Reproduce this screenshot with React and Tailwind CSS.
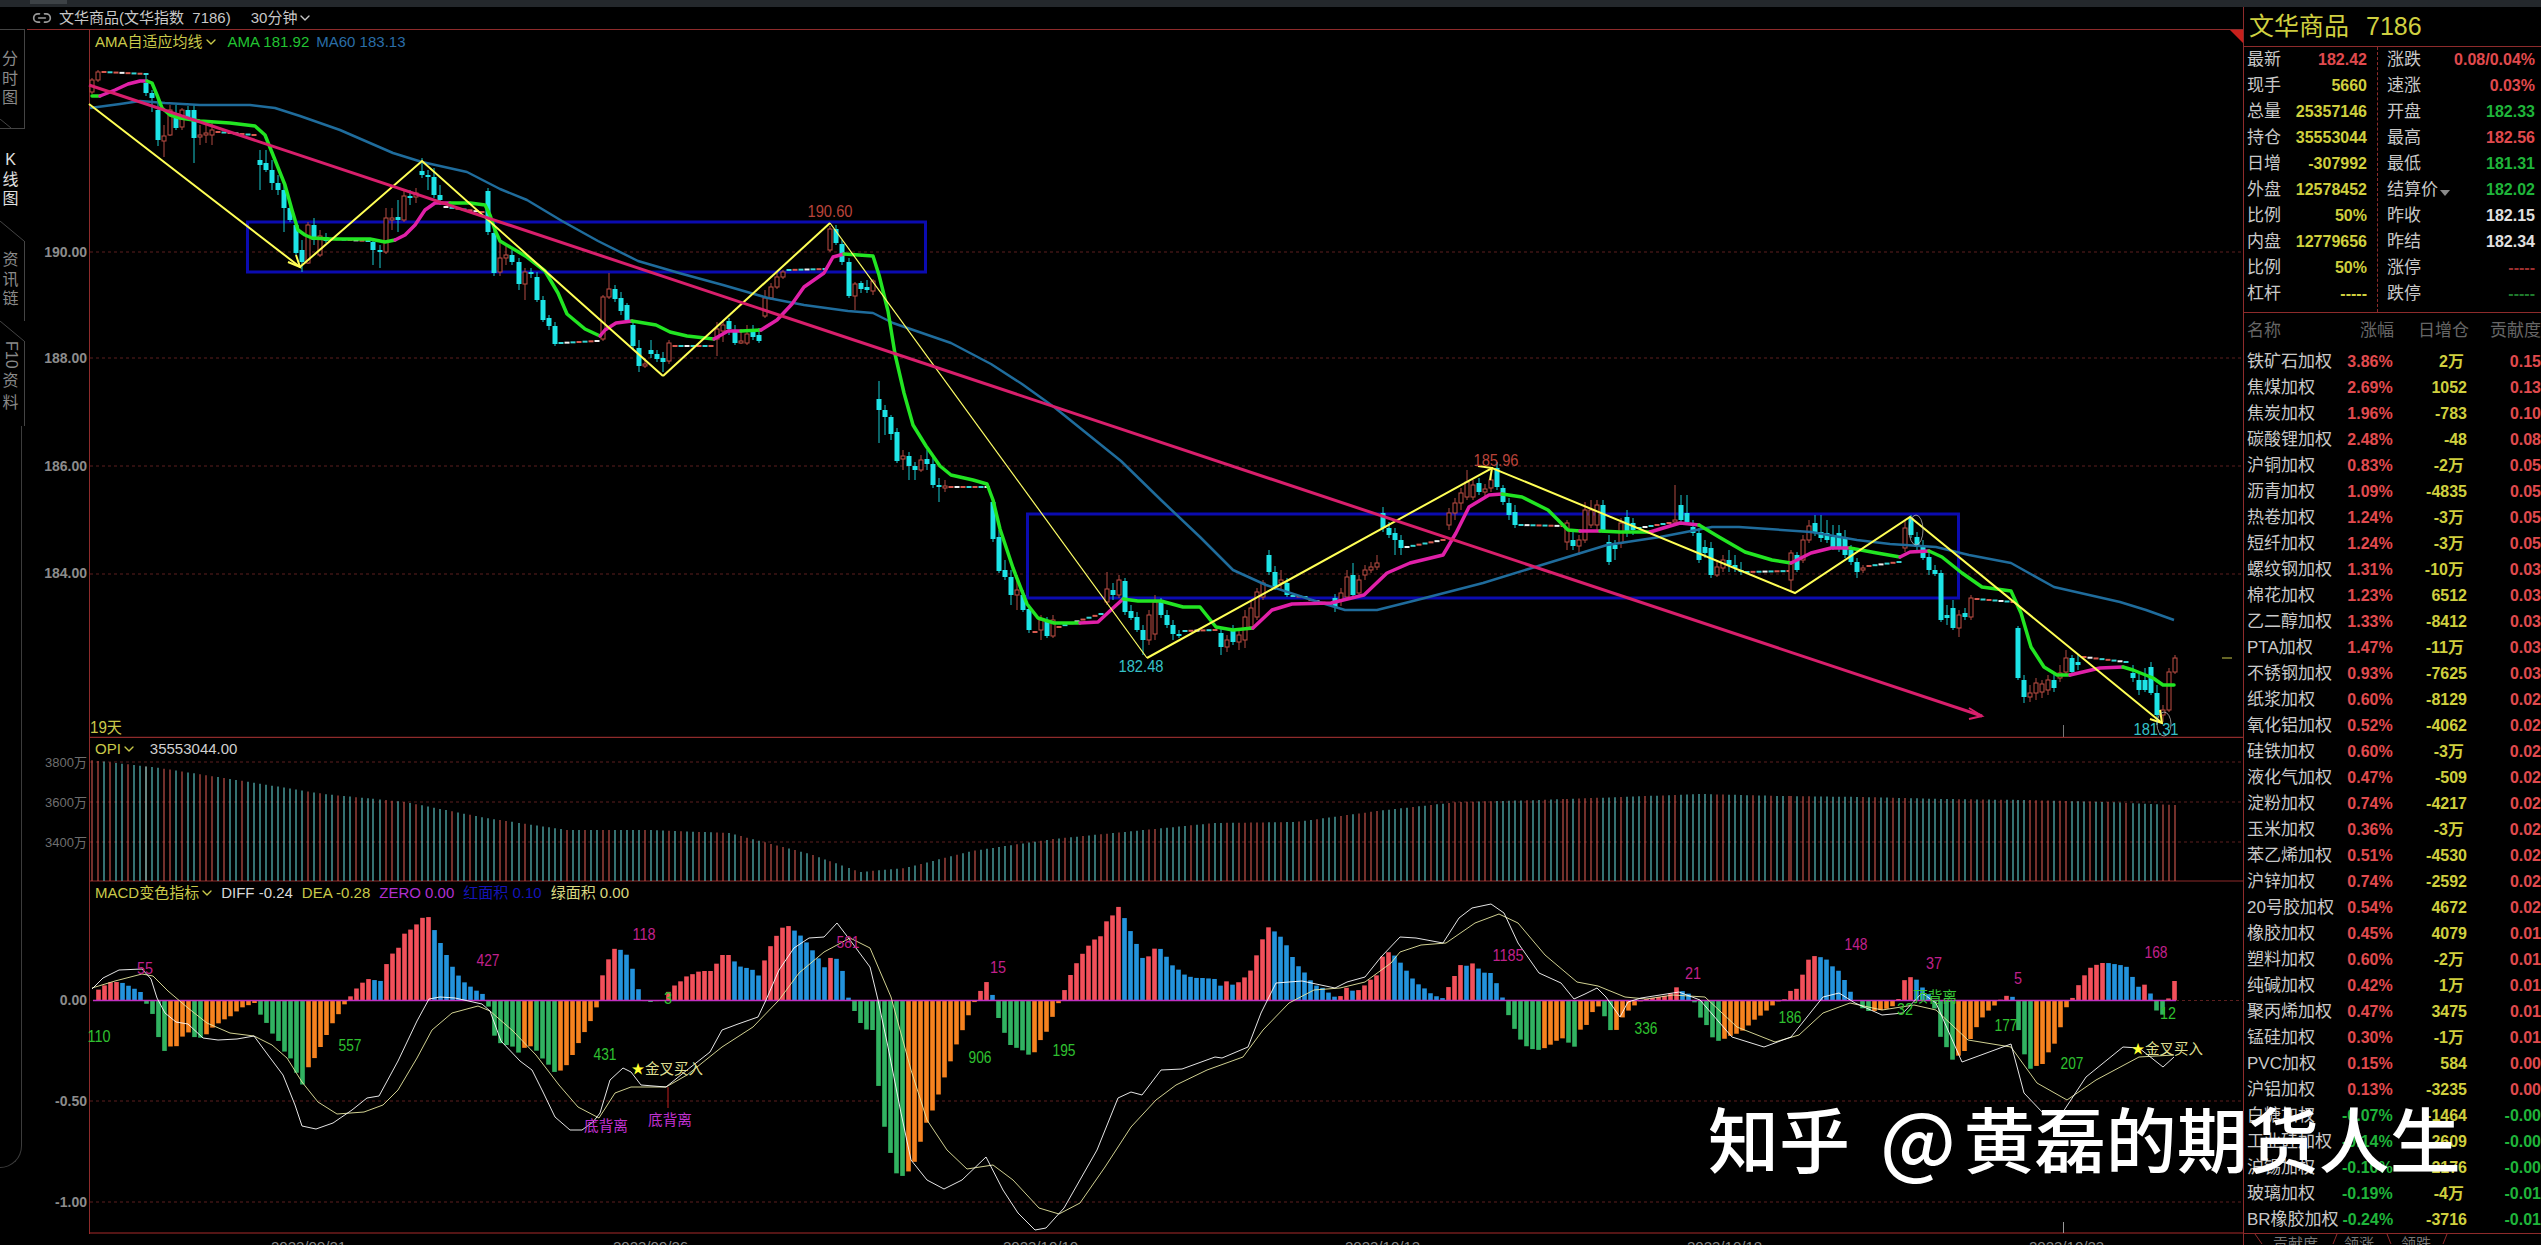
import React from 'react';
import { ChevronDown, Link2 } from 'lucide-react';

// candle bars: [x, open, close, high, low] in page pixels
const run = (x0, x1, y0, y1) => {
  const out = [];
  const n = Math.round((x1 - x0) / 6);
  for (let k = 0; k <= n; k++) {
    const y = y0 + ((y1 - y0) * k) / Math.max(n, 1);
    out.push([x0 + k * 6, y, y + (k % 3 === 1 ? -0.5 : 0.5), y - 1, y + 1]);
  }
  return out;
};

const bars = [
  [92,92,80,78,94],[98,80,72,70,82],
  ...run(104,143,72,74),
  [146,83,93,75,96],[152,93,98,90,112],[158,110,140,95,146],[164,141,136,125,157],[170,135,110,105,136],[176,113,128,105,130],[182,127,110,108,130],[188,110,118,106,120],[194,110,138,105,163],[200,137,135,125,145],[206,135,133,123,143],[212,135,130,120,145],
  ...run(218,255,132,135),
  [260,160,165,150,190],[266,163,170,150,172],[272,170,183,160,190],[278,183,190,175,195],[284,190,208,185,232],[290,208,220,200,222],[296,225,253,222,255],[302,250,262,240,272],[308,263,225,222,264],[314,225,240,218,245],[320,255,236,230,257],[326,237,241,233,243],
  ...run(332,367,239,241),
  [373,242,250,238,265],[380,250,252,245,268],[386,252,218,208,254],[392,220,218,208,230],[398,217,220,200,232],[404,220,196,190,222],[410,196,198,190,205],[416,197,193,188,203],[422,171,175,158,178],[428,175,177,170,190],[434,177,195,168,198],[440,195,200,185,205],
  ...run(446,483,207,212),
  [488,191,232,188,235],[494,233,273,225,276],[500,272,258,240,276],[506,258,255,245,265],[512,255,262,250,265],[519,262,284,258,290],[525,284,272,268,300],[531,272,274,268,278],[537,277,300,272,302],[543,300,320,296,322],[549,318,326,315,330],[555,326,344,322,346],
  ...run(561,597,343,341),
  [603,339,297,295,341],[609,297,289,273,299],[615,289,299,285,302],[621,298,311,292,315],[627,305,320,303,322],[633,325,346,320,350],[639,348,366,340,372],[645,366,364,358,368],[651,350,354,340,358],[657,354,359,350,362],[663,358,362,352,372],[669,361,343,340,364],
  ...run(675,711,346,346),
  [717,339,329,322,356],[723,331,325,320,342],[729,321,329,318,335],[735,332,343,325,345],[741,343,341,330,344],[747,343,334,325,345],[753,332,337,325,340],[759,335,341,328,343],[765,316,298,290,318],[771,298,287,283,300],[777,287,277,272,289],[783,277,272,270,279],
  ...run(789,825,270,269),
  [830,250,229,226,252],[836,229,243,225,245],[842,244,262,240,265],[849,262,296,258,298],[855,296,284,282,310],[861,283,289,281,293],[867,287,290,280,293],[873,291,281,279,295],[879,399,410,381,443],[885,410,417,405,435],[891,417,434,415,440],[897,432,461,428,463],[903,459,456,450,470],[909,456,466,452,480],[915,466,470,462,480],[921,470,460,455,472],[927,459,464,450,470],[933,464,485,455,488],[939,485,487,478,502],[945,488,486,480,492],
  ...run(951,987,487,487),
  [993,502,539,498,542],[999,537,571,530,573],[1005,570,577,560,580],[1011,577,595,570,605],[1017,595,590,575,610],[1023,595,610,590,612],[1029,609,630,605,633],[1035,632,632,627,637],[1041,630,620,615,640],[1047,621,636,617,638],[1053,636,620,615,638],
  ...run(1059,1101,627,614),
  [1107,602,589,572,605],[1113,590,595,583,600],[1119,595,580,575,598],[1125,581,612,578,615],[1131,611,618,605,620],[1137,617,630,612,632],[1143,630,640,625,655],[1149,640,615,610,645],[1155,634,602,595,640],[1161,602,615,598,618],[1167,615,625,610,628],[1173,625,634,620,640],[1179,634,636,630,638],
  ...run(1185,1215,631,630),
  [1221,633,647,628,655],[1227,647,640,635,652],[1233,630,642,625,645],[1239,642,635,630,650],[1245,640,617,610,648],[1251,627,608,600,630],[1257,617,592,588,620],[1263,597,583,580,600],[1269,555,572,550,575],[1275,572,587,566,590],[1281,583,580,570,590],[1287,583,595,578,597],
  ...run(1293,1305,596,597),...run(1311,1329,600,604),
  [1335,598,607,594,612],[1341,600,593,588,606],[1347,597,577,570,600],[1353,575,595,563,598],[1359,593,580,575,596],[1365,575,570,565,580],[1371,570,567,562,573],[1377,567,563,555,570],[1383,513,528,507,532],[1389,528,535,522,538],[1395,533,540,528,555],[1401,540,548,535,555],
  ...run(1407,1443,547,540),
  [1449,525,513,508,530],[1455,513,503,498,520],[1461,503,493,488,510],[1467,497,482,470,500],[1473,497,485,480,500],[1479,483,492,478,495],[1485,492,489,484,496],[1491,488,480,475,492],[1497,468,487,462,490],[1503,488,502,485,505],[1509,503,515,498,520],[1515,512,525,505,528],
  ...run(1521,1561,525,526),
  [1567,542,523,520,550],[1573,540,546,530,550],[1579,546,540,535,555],[1585,540,510,502,543],[1591,525,510,500,528],[1597,525,505,500,530],[1603,505,530,500,533],[1609,542,562,535,565],[1615,545,549,540,560],[1621,543,523,518,548],[1627,517,533,510,537],[1633,523,530,518,535],
  ...run(1639,1669,528,523),
  [1675,522,520,485,524],[1681,505,520,495,525],[1687,513,522,495,525],[1693,527,533,520,536],[1699,533,560,528,563],[1705,547,553,540,558],[1711,548,575,542,578],[1717,575,567,560,577],[1723,568,560,555,572],[1729,560,565,550,572],[1735,565,568,555,572],[1741,570,572,562,575],
  ...run(1747,1787,572,571),
  [1791,580,553,550,592],[1797,555,570,552,572],[1803,560,540,535,563],[1809,540,526,520,543],[1815,523,533,515,536],[1821,532,538,515,542],[1827,533,540,520,543],[1833,537,547,525,550],[1839,533,547,525,552],[1845,538,555,530,558],[1851,550,562,545,565],[1857,562,572,558,578],[1863,570,568,565,573],
  ...run(1869,1899,566,562),
  [1905,548,528,520,552],[1911,518,535,515,538],[1917,537,547,532,550],[1923,545,558,540,560],[1929,557,570,552,575],[1935,570,574,565,576],[1941,573,620,570,622],[1947,615,618,605,625],[1953,608,628,600,630],[1959,628,615,610,637],[1965,613,617,608,620],[1971,617,598,595,620],
  ...run(1977,2011,599,602),
  [2018,628,678,626,680],[2024,680,697,675,703],[2030,697,693,685,702],[2036,693,683,678,700],[2042,692,684,680,698],[2048,690,680,675,695],[2054,680,688,672,692],[2060,678,673,665,682],[2066,672,658,650,675],[2072,658,672,655,675],[2078,662,665,655,670],
  ...run(2084,2126,657,662),
  [2133,673,678,665,682],[2139,680,690,672,695],[2145,680,690,668,692],[2151,667,693,662,695],[2157,693,715,685,725],[2163,715,710,705,722],[2169,710,672,668,712],[2175,672,658,655,674],
];

const GREEN = '#22e522';
const PINK = '#e020a8';
// adaptive average, coloured by slope section
const ama = [
  [GREEN,[92,96],[100,96]],
  [PINK,[100,96],[115,90],[128,84],[140,81],[147,81]],
  [GREEN,[147,81],[152,83],[157,95],[162,108],[170,115],[180,118],[200,121],[230,123],[255,126],[265,135],[275,160],[285,185],[292,210],[298,230],[305,235],[312,238],[330,239],[370,239],[385,242],[395,240]],
  [PINK,[395,240],[405,235],[415,225],[425,210],[435,203],[450,203]],
  [GREEN,[450,203],[470,203],[485,205],[490,215],[495,230],[500,241],[527,257],[545,271],[558,293],[567,314],[585,329],[600,336]],
  [PINK,[600,336],[605,330],[616,323],[632,321]],
  [GREEN,[632,321],[656,325],[670,332],[687,336],[714,339]],
  [PINK,[714,339],[728,331],[741,331]],
  [GREEN,[741,331],[761,330]],
  [PINK,[761,330],[777,320],[792,304],[804,287],[824,273],[833,257],[844,254]],
  [GREEN,[844,254],[873,256],[879,275],[888,311],[895,354],[904,393],[913,425],[926,446],[940,466],[951,475],[973,480],[987,484],[993,500],[1000,529],[1013,568],[1027,604],[1038,618],[1054,623],[1080,623]],
  [PINK,[1080,623],[1098,622],[1112,609],[1123,599]],
  [GREEN,[1123,599],[1138,601],[1161,601],[1183,607],[1200,607],[1216,627],[1233,630],[1253,628]],
  [PINK,[1253,628],[1272,610],[1292,604],[1331,603],[1364,595],[1387,573],[1410,563],[1443,555],[1456,533],[1469,507],[1489,495],[1502,494]],
  [GREEN,[1502,494],[1522,497],[1548,510],[1568,530],[1580,531]],
  [PINK,[1580,531],[1600,531]],
  [GREEN,[1600,531],[1620,532],[1650,532]],
  [PINK,[1650,532],[1680,523],[1699,525]],
  [GREEN,[1699,525],[1719,537],[1745,552],[1772,560],[1791,563]],
  [PINK,[1791,563],[1811,553],[1831,548],[1850,548]],
  [GREEN,[1850,548],[1877,553],[1900,557]],
  [PINK,[1900,557],[1910,552],[1929,551]],
  [GREEN,[1929,551],[1942,557],[1962,573],[1982,587],[2011,591],[2021,613],[2031,647],[2044,667],[2057,675],[2070,675]],
  [PINK,[2070,675],[2100,668],[2123,667]],
  [GREEN,[2123,667],[2133,670],[2153,678],[2163,685],[2174,685]],
];

const ma60 = [[90,108],[120,104],[140,101],[165,103],[200,105],[250,105],[275,108],[300,116],[340,130],[393,153],[422,162],[467,172],[500,189],[527,200],[562,221],[598,241],[638,261],[679,273],[723,285],[768,298],[804,305],[848,311],[873,313],[893,323],[951,343],[991,364],[1022,384],[1054,407],[1121,461],[1161,500],[1200,537],[1233,570],[1266,585],[1312,600],[1345,610],[1377,610],[1417,600],[1483,583],[1535,567],[1607,545],[1660,537],[1712,527],[1739,527],[1811,532],[1857,540],[1890,544],[1936,547],[1969,555],[2011,563],[2054,587],[2120,602],[2146,610],[2174,620]];

const zigzag = [[89,104],[300,267],[422,161],[663,376],[830,223]];
const zigzag2 = [[1147,658],[1492,468],[1795,593],[1910,517],[2162,723]];

// open interest tops along the x axis
const opiTop = [[90,760],[160,768],[243,781],[324,794],[405,802],[486,818],[567,830],[648,830],[729,833],[810,854],[860,872],[905,868],[972,851],[1053,839],[1134,831],[1215,823],[1296,822],[1377,811],[1458,802],[1539,800],[1620,797],[1701,794],[1782,796],[1863,797],[1944,799],[2025,800],[2106,802],[2174,805]];

// histogram height per bar
const hist = [92,-1,98,10,105,15,111,18,117,18,123,17,129,14,135,11,140,9,146,-3,152,-12,159,-39,165,-52,171,-46,176,-47,182,-37,188,-32,194,-37,200,-38,207,-34,213,-27,219,-23,225,-19,231,-16,237,-11,243,-7,249,-5,254,-2,260,-14,266,-22,272,-33,278,-40,284,-51,291,-59,297,-74,302,-86,308,-68,314,-59,320,-48,326,-36,332,-24,338,-15,344,-5,350,3,356,11,362,17,368,21,374,20,381,19,386,35,392,46,398,51,404,66,410,70,416,75,422,82,428,84,434,71,440,58,446,46,452,34,458,25,464,18,471,13,477,9,482,7,488,-4,494,-35,500,-43,506,-45,512,-46,518,-53,524,-48,530,-46,536,-50,542,-58,548,-64,554,-72,560,-71,566,-66,572,-56,578,-44,584,-33,590,-22,596,-11,600,18,609,42,615,52,621,50,628,44,634,27,639,9,645,-2,651,-2,657,-1,663,-1,669,9,675,15,681,19,687,24,693,26,700,29,711,29,717,37,722,45,729,45,735,38,741,33,747,32,753,30,759,24,765,41,771,55,777,65,783,73,789,74,795,69,801,64,807,57,813,49,819,41,825,32,831,43,837,41,843,28,849,0,855,-12,861,-24,867,-30,873,-30,879,-91,885,-130,891,-155,897,-175,903,-176,909,-171,915,-161,921,-140,928,-118,934,-108,939,-93,945,-76,951,-60,957,-43,963,-29,969,-14,975,-1,981,10,986,19,993,4,999,-20,1005,-34,1011,-46,1017,-48,1022,-50,1029,-55,1035,-52,1041,-39,1046,-33,1052,-18,1059,-2,1065,11,1070,24,1076,36,1083,47,1089,55,1095,61,1101,64,1107,80,1113,85,1118,94,1124,83,1130,70,1137,55,1142,42,1148,43,1155,52,1161,51,1166,44,1172,35,1179,30,1185,25,1191,23,1197,22,1203,22,1215,21,1220,14,1227,19,1233,15,1239,18,1245,23,1251,30,1257,46,1263,62,1268,73,1274,69,1280,64,1287,54,1293,42,1299,33,1305,27,1311,19,1317,14,1323,12,1329,7,1335,3,1341,4,1347,13,1353,9,1359,10,1365,15,1370,20,1377,25,1382,43,1388,48,1394,45,1400,38,1406,30,1412,22,1418,16,1424,12,1430,7,1436,4,1442,1,1448,12,1454,23,1460,35,1466,34,1472,37,1479,31,1485,27,1491,27,1496,18,1502,4,1508,-14,1515,-30,1520,-39,1526,-46,1532,-49,1538,-50,1545,-48,1550,-45,1556,-41,1562,-38,1569,-43,1575,-47,1580,-30,1586,-26,1593,-11,1599,-6,1604,-15,1610,-30,1616,-31,1622,-18,1629,-10,1635,-5,1641,-1,1646,1,1652,2,1658,3,1664,4,1670,6,1676,13,1682,9,1688,7,1694,-1,1700,-17,1706,-24,1712,-37,1718,-41,1724,-39,1730,-36,1736,-34,1742,-31,1748,-26,1754,-20,1760,-16,1766,-11,1773,-5,1779,-1,1784,0,1790,9,1796,10,1802,24,1808,40,1814,44,1820,43,1826,41,1832,34,1838,30,1844,21,1850,9,1856,0,1862,-8,1868,-11,1874,-11,1880,-10,1886,-9,1893,-6,1898,-1,1903,19,1910,23,1916,21,1922,13,1928,7,1934,-6,1940,-36,1946,-46,1952,-60,1958,-56,1964,-52,1970,-40,1976,-28,1982,-18,1988,-11,1994,-6,2000,0,2006,4,2012,6,2018,-28,2024,-53,2030,-69,2036,-66,2042,-65,2048,-53,2054,-45,2060,-29,2066,-8,2072,1,2078,14,2084,24,2090,32,2096,35,2102,37,2108,37,2114,36,2120,35,2126,34,2132,24,2138,13,2144,16,2150,8,2156,-10,2162,-16,2168,0,2174,19];

const diff = [[92,989],[103,978],[119,970],[142,969],[151,979],[157,998],[165,1013],[176,1022],[188,1024],[203,1038],[218,1040],[237,1039],[254,1036],[268,1055],[283,1075],[295,1105],[302,1126],[316,1129],[333,1123],[352,1110],[367,1098],[379,1096],[398,1061],[417,1021],[429,999],[440,997],[455,998],[482,1004],[490,1011],[501,1041],[520,1061],[532,1070],[543,1092],[555,1117],[570,1130],[582,1130],[593,1122],[600,1113],[610,1080],[623,1068],[631,1072],[641,1085],[666,1087],[687,1070],[710,1052],[722,1030],[738,1024],[758,1017],[766,1000],[779,970],[794,948],[809,938],[824,937],[837,923],[850,940],[870,967],[878,1000],[888,1047],[901,1113],[911,1160],[927,1180],[944,1189],[962,1180],[986,1157],[1003,1190],[1018,1213],[1035,1230],[1046,1228],[1064,1208],[1097,1150],[1118,1098],[1131,1092],[1142,1095],[1161,1070],[1182,1069],[1215,1057],[1222,1058],[1248,1047],[1261,1013],[1276,983],[1302,981],[1335,988],[1347,982],[1365,977],[1381,957],[1400,937],[1416,938],[1443,943],[1459,918],[1472,908],[1491,904],[1504,913],[1518,943],[1539,973],[1561,983],[1574,999],[1585,994],[1597,988],[1606,997],[1620,1017],[1628,1002],[1641,998],[1679,992],[1700,1000],[1732,1037],[1764,1047],[1791,1037],[1823,997],[1839,993],[1855,1003],[1882,1015],[1903,1013],[1922,993],[1936,1003],[1962,1062],[2011,1044],[2024,1093],[2043,1113],[2061,1115],[2086,1077],[2123,1047],[2139,1048],[2163,1067],[2174,1057]];
const dea = [[92,988],[115,981],[142,974],[153,976],[168,991],[188,1008],[207,1023],[230,1033],[254,1036],[272,1045],[287,1058],[302,1082],[318,1102],[337,1114],[364,1112],[383,1105],[398,1090],[417,1058],[432,1030],[452,1013],[478,1006],[490,1011],[513,1031],[536,1055],[559,1085],[578,1107],[599,1118],[615,1093],[631,1087],[666,1087],[687,1075],[722,1047],[753,1027],[779,1000],[799,973],[824,952],[850,938],[870,948],[891,997],[911,1070],[927,1120],[947,1150],[967,1169],[993,1165],[1013,1180],[1039,1208],[1059,1214],[1080,1203],[1105,1167],[1131,1127],[1156,1100],[1176,1085],[1207,1070],[1243,1057],[1263,1030],[1289,1003],[1314,990],[1340,988],[1365,982],[1391,963],[1400,952],[1421,945],[1446,943],[1475,923],[1499,914],[1518,923],[1545,955],[1577,982],[1598,986],[1625,997],[1646,999],[1673,995],[1705,997],[1737,1027],[1775,1042],[1799,1035],[1823,1013],[1850,1003],[1882,1010],[1914,1005],[1936,1010],[1968,1040],[2011,1047],[2037,1083],[2067,1100],[2096,1080],[2139,1057],[2174,1055]];

const LINE_RED = '#8e2b2b';
const GRID = '#5c1f1f';
const AXIS = '#8c8c8c';
const pts = (list) => list.map((p) => p.join(',')).join(' ');

const interp = (list, x) => {
  for (let k = 1; k < list.length; k++) {
    if (x <= list[k][0]) {
      const [x0, y0] = list[k - 1];
      const [x1, y1] = list[k];
      return y0 + ((y1 - y0) * (x - x0)) / (x1 - x0);
    }
  }
  return list[list.length - 1][1];
};

const histPairs = [];
for (let k = 0; k < hist.length; k += 2) histPairs.push([hist[k], hist[k + 1]]);

function Candle({ bar, index }) {
  const [x, o, c, hi, lo] = bar;
  const doji = Math.abs(o - c) < 1.5;
  if (doji) {
    const tone = index % 5 === 0 ? '#f2f2f2' : index % 2 === 0 ? '#d85a50' : '#35d6d6';
    return <line x1={x - 2.5} x2={x + 2.5} y1={o} y2={o} stroke={tone} strokeWidth="2" />;
  }
  const up = c < o;
  const top = Math.min(o, c);
  const h = Math.abs(o - c);
  return (
    <g>
      <line x1={x} x2={x} y1={hi} y2={lo} stroke={up ? '#b04a42' : '#18c9cf'} strokeWidth="1" />
      {up ? (
        <rect x={x - 2} y={top} width="4" height={h} fill="#000" stroke="#c04e45" strokeWidth="1" />
      ) : (
        <rect x={x - 2.5} y={top} width="5" height={h} fill="#1de3e6" />
      )}
    </g>
  );
}

function GridLine({ y }) {
  return <line x1="90" x2="2243" y1={y} y2={y} stroke={GRID} strokeWidth="1" strokeDasharray="3 3" />;
}

function AxisLabel({ y, children, thin }) {
  return (
    <text x="87" y={y} textAnchor="end" dominantBaseline="central" fill={thin ? '#6f6f6f' : AXIS} fontWeight={thin ? 400 : 700} fontSize={thin ? 13 : 14}>
      {children}
    </text>
  );
}

// narrow chart annotation, squeezed to the width the quote software draws it at
function Note({ x, y, fill, w, size = 16, children }) {
  return (
    <text x={x} y={y} textAnchor="middle" dominantBaseline="central" fill={fill} fontSize={size} textLength={w} lengthAdjust="spacingAndGlyphs">
      {children}
    </text>
  );
}

function PriceChart() {
  return (
    <div className="relative h-[708px]">
      <svg className="block" width="2218" height="708" viewBox="25 30 2218 708">
        <line x1="89.5" x2="89.5" y1="30" y2="738" stroke={LINE_RED} />
        <line x1="89" x2="2243" y1="737.5" y2="737.5" stroke={LINE_RED} strokeWidth="1.5" />
        {[252, 358, 466, 574].map((y) => <GridLine key={y} y={y} />)}
        <AxisLabel y={252}>190.00</AxisLabel>
        <AxisLabel y={358}>188.00</AxisLabel>
        <AxisLabel y={466}>186.00</AxisLabel>
        <AxisLabel y={573}>184.00</AxisLabel>

        <rect x="247.5" y="222" width="678" height="50" fill="none" stroke="#0b0bb0" strokeWidth="3" />
        <rect x="1027.5" y="514" width="931" height="84" fill="none" stroke="#0b0bb0" strokeWidth="3" />

        {bars.map((b, i) => <Candle key={i} bar={b} index={i} />)}

        <polyline points={pts(ma60)} fill="none" stroke="#1f6c9c" strokeWidth="2.5" strokeLinejoin="round" />
        {ama.map(([color, ...line], i) => (
          <polyline key={i} points={pts(line)} fill="none" stroke={color} strokeWidth="3.5" strokeLinejoin="round" strokeLinecap="round" />
        ))}

        <polyline points={pts(zigzag.slice(0, 4))} fill="none" stroke="#ffff55" strokeWidth="2" />
        <polyline points={pts([[663, 376], [830, 223]])} fill="none" stroke="#ffff55" strokeWidth="2" />
        <polyline points={pts([[830, 223], [1147, 658]])} fill="none" stroke="#ffff66" strokeWidth="1.2" />
        <polyline points={pts(zigzag2)} fill="none" stroke="#ffff55" strokeWidth="2" />

        <line x1="89" y1="85" x2="1982" y2="716" stroke="#d81f6c" strokeWidth="3" />
        <polyline points="1969,708 1982,716 1969,719" fill="none" stroke="#d81f6c" strokeWidth="2" />

        <polyline points="288,262 300,267 296,255" fill="none" stroke="#ffff55" strokeWidth="2" />
        <polyline points="1478,466 1492,468 1490,480" fill="none" stroke="#ffff55" strokeWidth="2" />
        <polyline points="2150,719 2162,723 2160,710" fill="none" stroke="#ffff55" strokeWidth="2" />
        <ellipse cx="1916" cy="530" rx="7" ry="15" fill="none" stroke="#cccccc" strokeWidth="0.7" />
        <ellipse cx="2164" cy="724" rx="7" ry="12" fill="none" stroke="#cccccc" strokeWidth="0.7" />

        <Note x={830} y={211} fill="#b8433a" w={45}>190.60</Note>
        <Note x={1141} y={666} fill="#35c0c8" w={45}>182.48</Note>
        <Note x={1496} y={460} fill="#b8433a" w={45}>185.96</Note>
        <Note x={2156} y={729} fill="#35c0c8" w={45}>181.31</Note>
        <Note x={106} y={727} fill="#c9c94a" w={32}>19天</Note>

        <line x1="2063.5" x2="2063.5" y1="725" y2="737" stroke="#777" />
        <line x1="2222" x2="2232" y1="658" y2="658" stroke="#c9c94a" />
        <polygon points="2230,30 2243,30 2243,43" fill="#c8201c" />
      </svg>
      <div className="absolute left-[70px] top-[2px] flex items-center text-[15px] leading-[20px]">
        <span className="text-[#c9c94a]">AMA自适应均线</span>
        <ChevronDown className="size-4 text-[#c9c94a]" />
        <span className="ml-[9px] text-[#22c432]">AMA 181.92</span>
        <span className="ml-[7px] text-[#2a6ea8]">MA60 183.13</span>
      </div>
    </div>
  );
}

function OpiChart() {
  return (
    <div className="relative h-[144px]">
      <svg className="block" width="2218" height="144" viewBox="25 738 2218 144">
        <line x1="89.5" x2="89.5" y1="738" y2="882" stroke={LINE_RED} />
        <line x1="89" x2="2243" y1="881" y2="881" stroke={LINE_RED} />
        {[762, 802, 842].map((y) => <GridLine key={y} y={y} />)}
        <AxisLabel y={762} thin>3800万</AxisLabel>
        <AxisLabel y={802} thin>3600万</AxisLabel>
        <AxisLabel y={842} thin>3400万</AxisLabel>
        {bars.map(([x, o, c], i) => (
          <line key={i} x1={x} x2={x} y1={interp(opiTop, x)} y2="881" stroke={c < o ? '#d2584f' : '#62cfcf'} strokeWidth="1.1" />
        ))}
      </svg>
      <div className="absolute left-[70px] top-[1px] flex items-center text-[15px] leading-[20px]">
        <span className="text-[#c9c94a]">OPI</span>
        <ChevronDown className="size-4 text-[#c9c94a]" />
        <span className="ml-[13px] text-[#cfcfcf]">35553044.00</span>
      </div>
    </div>
  );
}

function MacdChart() {
  const columns = [];
  for (let i = 0; i < 348; i++) {
    const x = 92.5 + i * 6;
    const h = interp(histPairs, x);
    const prev = interp(histPairs, x - 6);
    let color = '#f2505a';
    if (h >= 0 && h < prev) color = '#2393dd';
    if (h < 0 && h <= prev) color = '#31b361';
    if (h < 0 && h > prev) color = '#f6821f';
    columns.push(
      <rect key={i} x={x - 2.3} y={h >= 0 ? 1000 - h : 1000} width="4.6" height={Math.abs(h)} fill={color} />
    );
  }

  const magenta = [[145,968,'55',16],[488,960,'427',23],[644,934,'118',23],[848,942,'581',23],[998,967,'15',16],[1508,955,'1185',31],[1693,973,'21',16],[1856,944,'148',23],[1934,963,'37',16],[2018,978,'5',8],[2156,952,'168',23]];
  const green = [[99,1036,'110',23],[350,1045,'557',23],[605,1054,'431',23],[668,998,'3',8],[980,1057,'906',23],[1064,1050,'195',23],[1646,1028,'336',23],[1790,1017,'186',23],[1905,1009,'32',16],[2006,1025,'177',23],[2072,1063,'207',23],[2168,1013,'12',16]];

  return (
    <div className="relative h-[352px]">
      <svg className="block" width="2218" height="352" viewBox="25 882 2218 352">
        <line x1="89.5" x2="89.5" y1="882" y2="1234" stroke={LINE_RED} />
        <line x1="89" x2="2243" y1="1233" y2="1233" stroke="#a82a2a" />
        {[1101, 1202].map((y) => <GridLine key={y} y={y} />)}
        <line x1="2176" x2="2243" y1="1000.5" y2="1000.5" stroke={GRID} strokeDasharray="3 3" />
        <AxisLabel y={1000}>0.00</AxisLabel>
        <AxisLabel y={1101}>-0.50</AxisLabel>
        <AxisLabel y={1202}>-1.00</AxisLabel>
        {columns}
        <line x1="93" x2="2176" y1="1000.5" y2="1000.5" stroke="#c22fc2" strokeWidth="1.5" />
        <polyline points={pts(dea)} fill="none" stroke="#e8e8a0" strokeWidth="0.9" />
        <polyline points={pts(diff)} fill="none" stroke="#ffffff" strokeWidth="0.9" />
        <line x1="668" x2="668" y1="1087" y2="1108" stroke="#c02020" />
        <line x1="2063.5" x2="2063.5" y1="1222" y2="1233" stroke="#999" />
        {magenta.map(([x, y, t, w]) => <Note key={t + x} x={x} y={y} fill="#c0208c" w={w}>{t}</Note>)}
        {green.map(([x, y, t, w]) => <Note key={t + x} x={x} y={y} fill="#2fc030" w={w}>{t}</Note>)}
        <Note x={606} y={1125} fill="#c030d0" w={44} size={15}>底背离</Note>
        <Note x={670} y={1119} fill="#c030d0" w={44} size={15}>底背离</Note>
        <Note x={1935} y={996} fill="#38c838" w={44} size={15}>顶背离</Note>
        <text x="638" y="1068" textAnchor="middle" dominantBaseline="central" fill="#ffff30" fontSize="13">★</text>
        <Note x={674} y={1068} fill="#dede90" w={58} size={15}>金叉买入</Note>
        <text x="2138" y="1048" textAnchor="middle" dominantBaseline="central" fill="#ffff30" fontSize="13">★</text>
        <Note x={2174} y={1048} fill="#dede90" w={58} size={15}>金叉买入</Note>
      </svg>
      <div className="absolute left-[70px] top-[1px] flex items-center whitespace-pre text-[15px] leading-[20px]">
        <span className="text-[#c9c94a]">MACD变色指标</span>
        <ChevronDown className="size-4 text-[#c9c94a]" />
        <span className="ml-[6px] text-[#d8d8d8]">DIFF -0.24</span>
        <span className="ml-[9px] text-[#c9c94a]">DEA -0.28</span>
        <span className="ml-[9px] text-[#b030d0]">ZERO 0.00</span>
        <span className="ml-[9px] text-[#1414b8]">红面积 0.10</span>
        <span className="ml-[9px] text-[#d8d880]">绿面积 0.00</span>
      </div>
    </div>
  );
}

function DateRow() {
  const dates = [['2023/09/21', 'left-[246px]'], ['2023/09/26', 'left-[588px]'], ['2023/10/10', 'left-[978px]'], ['2023/10/12', 'left-[1320px]'], ['2023/10/18', 'left-[1662px]'], ['2023/10/23', 'left-[2004px]']];
  return (
    <div className="relative h-[11px] overflow-hidden">
      {dates.map(([d, pos]) => (
        <span key={d} className={`absolute top-[4px] text-[15px] leading-[18px] text-[#858585] ${pos}`}>{d}</span>
      ))}
    </div>
  );
}

// the slanted top-left corner of an unselected side tab
function TabCorner() {
  return (
    <>
      <svg className="absolute left-0 top-0" width="25" height="21" viewBox="0 0 25 21">
        <path d="M0 0 L24 20" stroke="#444" fill="none" />
      </svg>
      <div className="absolute bottom-0 right-0 top-[20px] border-r border-[#444]" />
    </>
  );
}

function Sidebar() {
  const tab = 'relative flex flex-col items-center pr-[4px] text-[16px] leading-[19.5px]';
  return (
    <div className="flex w-[25px] shrink-0 flex-col pt-[22px] text-[#8a8a8a]">
      <div className={`${tab} h-[100px] border-y border-r border-[#444] pt-[19px]`}>
        <span>分</span><span>时</span><span>图</span>
        <svg className="absolute bottom-0 left-0" width="12" height="9" viewBox="0 0 12 9">
          <path d="M0 0 L11 9" stroke="#444" fill="none" />
        </svg>
      </div>
      <div className={`${tab} h-[92px] pt-[21px] text-[#e0e0e0]`}>
        <span>K</span><span>线</span><span>图</span>
      </div>
      <div className={`${tab} h-[100px] pt-[29px]`}>
        <TabCorner />
        <span>资</span><span>讯</span><span>链</span>
      </div>
      <div className={`${tab} h-[105px] pt-[20px]`}>
        <TabCorner />
        <span className="leading-[30px] [writing-mode:vertical-rl]">F10</span>
        <span className="mt-[2px]">资</span><span className="mt-[3px]">料</span>
      </div>
      <div className="h-[742px] w-[22px] rounded-br-[38px] border-r border-b border-[#3c3c3c]" />
    </div>
  );
}

const quotes = [
  ['最新', '182.42', 'red', '涨跌', '0.08/0.04%', 'red'],
  ['现手', '5660', 'yellow', '速涨', '0.03%', 'red'],
  ['总量', '25357146', 'yellow', '开盘', '182.33', 'green'],
  ['持仓', '35553044', 'yellow', '最高', '182.56', 'red'],
  ['日增', '-307992', 'yellow', '最低', '181.31', 'green'],
  ['外盘', '12578452', 'yellow', '结算价', '182.02', 'green'],
  ['比例', '50%', 'yellow', '昨收', '182.15', 'white'],
  ['内盘', '12779656', 'yellow', '昨结', '182.34', 'white'],
  ['比例', '50%', 'yellow', '涨停', '-----', 'dimred'],
  ['杠杆', '-----', 'yellow', '跌停', '-----', 'dimgreen'],
];

const tone = {
  red: 'text-[#e04a4e]',
  yellow: 'text-[#cfcf3e]',
  green: 'text-[#1fb43a]',
  white: 'text-[#e0e0e0]',
  dimred: 'text-[#9c2f2f]',
  dimgreen: 'text-[#1f7a2c]',
};

const weights = [
  ['铁矿石加权','3.86%','2万','0.15'],['焦煤加权','2.69%','1052','0.13'],['焦炭加权','1.96%','-783','0.10'],['碳酸锂加权','2.48%','-48','0.08'],
  ['沪铜加权','0.83%','-2万','0.05'],['沥青加权','1.09%','-4835','0.05'],['热卷加权','1.24%','-3万','0.05'],['短纤加权','1.24%','-3万','0.05'],
  ['螺纹钢加权','1.31%','-10万','0.03'],['棉花加权','1.23%','6512','0.03'],['乙二醇加权','1.33%','-8412','0.03'],['PTA加权','1.47%','-11万','0.03'],
  ['不锈钢加权','0.93%','-7625','0.03'],['纸浆加权','0.60%','-8129','0.02'],['氧化铝加权','0.52%','-4062','0.02'],['硅铁加权','0.60%','-3万','0.02'],
  ['液化气加权','0.47%','-509','0.02'],['淀粉加权','0.74%','-4217','0.02'],['玉米加权','0.36%','-3万','0.02'],['苯乙烯加权','0.51%','-4530','0.02'],
  ['沪锌加权','0.74%','-2592','0.02'],['20号胶加权','0.54%','4672','0.02'],['橡胶加权','0.45%','4079','0.01'],['塑料加权','0.60%','-2万','0.01'],
  ['纯碱加权','0.42%','1万','0.01'],['聚丙烯加权','0.47%','3475','0.01'],['锰硅加权','0.30%','-1万','0.01'],['PVC加权','0.15%','584','0.00'],
  ['沪铝加权','0.13%','-3235','0.00'],['白糖加权','-0.07%','-1464','-0.00'],['工业硅加权','-0.14%','-2609','-0.00'],['沪锡加权','-0.10%','-2176','-0.00'],
  ['玻璃加权','-0.19%','-4万','-0.01'],['BR橡胶加权','-0.24%','-3716','-0.01'],
];

function QuotePanel() {
  return (
    <div className="flex w-[298px] shrink-0 flex-col overflow-hidden border-l border-[#8e2b2b]">
      <div className="flex h-[40px] items-center gap-[17px] border-b border-[#8e2b2b] pl-[5px] text-[25px] leading-none text-[#d0d040]">
        <span>文华商品</span>
        <span>7186</span>
      </div>
      <div className="flex h-[266px] border-b border-[#8e2b2b]">
        <div className="w-[134px] border-r border-dashed border-[#8e2b2b]">
          {quotes.map((q, i) => (
            <div key={i} className="flex h-[26px] items-center justify-between pl-[3px] pr-[10px]">
              <span className="text-[17px] text-[#c8c8c8]">{q[0]}</span>
              <span className={`text-[16px] font-bold ${tone[q[2]]}`}>{q[1]}</span>
            </div>
          ))}
        </div>
        <div className="flex-1">
          {quotes.map((q, i) => (
            <div key={i} className="flex h-[26px] items-center justify-between pl-[9px] pr-[6px]">
              <span className="flex items-center text-[17px] text-[#c8c8c8]">
                {q[3]}
                {q[3] === '结算价' && <span className="mt-[5px] ml-[2px] border-x-[5px] border-t-[6px] border-x-transparent border-t-[#8a8a8a]" />}
              </span>
              <span className={`text-[16px] font-bold ${tone[q[5]]}`}>{q[4]}</span>
            </div>
          ))}
        </div>
      </div>
      <div className="flex h-[36px] items-center whitespace-nowrap text-[17px] text-[#666]">
        <span className="w-[92px] pl-[3px]">名称</span>
        <span className="w-[58px] text-right">涨幅</span>
        <span className="w-[75px] text-right">日增仓</span>
        <span className="w-[72px] text-right">贡献度</span>
      </div>
      {weights.map(([name, pct, inc, part]) => {
        const up = !pct.startsWith('-');
        const color = up ? 'text-[#e04a4e]' : 'text-[#1fb43a]';
        return (
          <div key={name} className="flex h-[26px] shrink-0 items-center whitespace-nowrap">
            <span className="w-[92px] pl-[3px] text-[17px] text-[#c8c8c8]">{name}</span>
            <span className={`w-[58px] text-right text-[16px] font-bold ${color}`}>{pct}</span>
            <span className={`w-[75px] text-right text-[16px] font-bold text-[#cfcf3e] ${inc.endsWith('万') ? 'pr-[3px]' : ''}`}>{inc}</span>
            <span className={`w-[74px] shrink-0 text-right text-[16px] font-bold ${color}`}>{part}</span>
          </div>
        );
      })}
      <div className="relative flex-1 border-t border-[#8e2b2b] text-[15px] text-[#777]">
        <span className="absolute left-[29px] top-[1px] leading-[18px]">贡献度</span>
        <span className="absolute left-[100px] top-[1px] leading-[18px]">领涨</span>
        <span className="absolute left-[157px] top-[1px] leading-[18px]">领跌</span>
        <svg className="absolute left-0 top-0" width="298" height="10" viewBox="0 0 298 10">
          <path d="M11 0 L18 10 M89 10 L93 0 M143 0 L147 10 M199 10 L203 0" stroke="#8e2b2b" fill="none" />
        </svg>
      </div>
    </div>
  );
}

export default function App() {
  return (
    <div className="relative flex h-[1245px] w-[2541px] flex-col overflow-hidden bg-black [font-family:'Liberation_Sans','Noto_Sans_CJK_SC',sans-serif]">
      <div className="h-[7px] shrink-0 bg-[#24282c]">
        <div className="ml-[30px] h-[4px] w-[37px] bg-[#3d4246]" />
      </div>
      <div className="flex flex-1">
        <Sidebar />
        <div className="flex w-[2218px] shrink-0 flex-col">
          <div className="ml-[2px] flex h-[23px] items-center border-b border-[#8e2b2b] pl-[5px] text-[15px] text-[#c8c8c8]">
            <Link2 className="size-[20px] text-[#9a9a9a]" strokeWidth={2} />
            <span className="ml-[7px] whitespace-pre">文华商品(文华指数  7186)</span>
            <span className="ml-[20px] flex items-center">30分钟<ChevronDown className="size-4" /></span>
          </div>
          <PriceChart />
          <OpiChart />
          <MacdChart />
          <DateRow />
        </div>
        <QuotePanel />
      </div>
      <div className="absolute left-[1708px] top-[1091px] flex items-center whitespace-nowrap text-[71px] font-medium leading-[90px] text-white [font-family:'Noto_Sans_CJK_SC',sans-serif]">
        <span>知乎</span>
        <span className="ml-[30px] text-[78px]">@</span>
        <span className="ml-[8px]">黄磊的期货人生</span>
      </div>
    </div>
  );
}
